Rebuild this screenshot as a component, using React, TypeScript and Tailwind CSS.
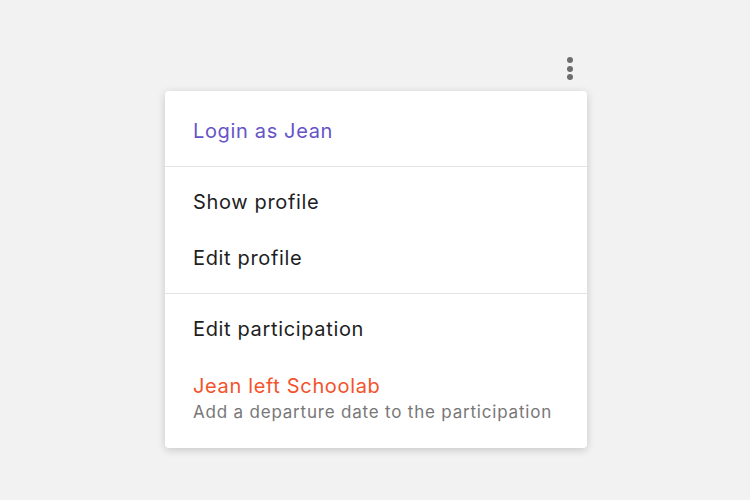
export default function App() {
  const font = { fontFamily: "Inter, 'Noto Sans', sans-serif" };
  return (
    <div className="w-[750px] h-[500px] bg-[#f2f2f2] relative" style={font}>
      <div className="absolute left-[567px] top-[57px] flex flex-col gap-[2.5px]">
        <span className="block w-[6px] h-[6px] rounded-full bg-[#6e6e6e]" />
        <span className="block w-[6px] h-[6px] rounded-full bg-[#6e6e6e]" />
        <span className="block w-[6px] h-[6px] rounded-full bg-[#6e6e6e]" />
      </div>
      <div className="absolute left-[165px] top-[91px] w-[422px] bg-white rounded-[4px] shadow-[0_2px_8px_rgba(0,0,0,0.18)] tracking-[0.65px]">
        <div className="pt-[12px] pb-[7px]">
          <div className="h-[56px] flex items-center px-[28px] text-[20px] text-[#6554c8]">Login as Jean</div>
        </div>
        <div className="h-px bg-[#e4e4e4]" />
        <div className="py-[7px]">
          <div className="h-[56px] flex items-center px-[28px] text-[20px] text-[#1e1e1e]">Show profile</div>
          <div className="h-[56px] flex items-center px-[28px] text-[20px] text-[#1e1e1e]">Edit profile</div>
        </div>
        <div className="h-px bg-[#e4e4e4]" />
        <div className="pt-[7px] pb-[7px]">
          <div className="h-[56px] flex items-center px-[28px] text-[20px] text-[#1e1e1e]">Edit participation</div>
          <div className="px-[28px] pt-[15px] pb-[17px] flex flex-col">
            <span className="text-[20px] leading-[28px] text-[#f4522b]">Jean left Schoolab</span>
            <span className="text-[17px] leading-[24px] tracking-[0.8px] text-[#777777]">Add a departure date to the participation</span>
          </div>
        </div>
      </div>
    </div>
  );
}
